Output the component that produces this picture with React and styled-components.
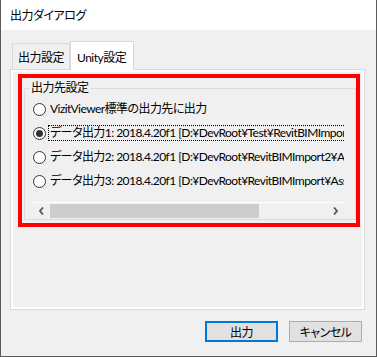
import React from "react";
import styled, { createGlobalStyle } from "styled-components";

const GlobalStyle = createGlobalStyle`
  html, body { margin: 0; padding: 0; background: #ffffff; }
  * { box-sizing: border-box; }
`;

const FONT = `Lato, "Noto Sans CJK JP", sans-serif`;

const Window = styled.div`
  width: 377px;
  height: 357px;
  display: flex;
  flex-direction: column;
  border-left: 1px solid #5a5a5a;
  border-right: 1px solid #5a5a5a;
  border-bottom: 1px solid #5a5a5a;
  font-family: ${FONT};
  font-size: 12px;
  font-feature-settings: "palt";
  letter-spacing: -0.5px;
  color: #000;
`;

const TitleBar = styled.div`
  height: 30px;
  flex: none;
  background: #ffffff;
  display: flex;
  align-items: center;
  padding-left: 9px;
  padding-bottom: 1px;
`;

const Body = styled.div`
  flex: 1;
  background: #f0f0f0;
  padding: 11px 11px 0 9px;
  display: flex;
  flex-direction: column;
`;

const TabStrip = styled.div`
  display: flex;
  align-items: flex-end;
  height: 29px;
  padding-left: 2px;
  margin-bottom: -1px;
  position: relative;
  z-index: 1;
`;

const Tab = styled.div`
  height: ${(p) => (p.$active ? 29 : 26)}px;
  width: ${(p) => p.$w}px;
  margin-bottom: ${(p) => (p.$active ? 0 : 1)}px;
  background: ${(p) => (p.$active ? "#ffffff" : "#f0f0f0")};
  border: 1px solid #d9d9d9;
  border-bottom: none;
  padding-left: ${(p) => p.$pl}px;
  display: flex;
  align-items: center;
  white-space: nowrap;
`;

const Panel = styled.div`
  width: 355px;
  height: 241px;
  border: 1px solid #d9d9d9;
  box-shadow: inset 0 0 0 2px #ffffff;
  background: #f0f0f0;
  padding: 4px 0 0 7px;
`;

const RedFrame = styled.div`
  width: 342px;
  height: 153px;
  border: 4px solid #ff0000;
  padding: 3px 0 3px 2px;
`;

const GroupBox = styled.fieldset`
  margin: 0;
  width: 332px;
  height: 139px;
  border: 1px solid #dcdcdc;
  padding: 0 10px 0 4px;
  min-width: 0;
  display: flex;
  flex-direction: column;
`;

const Legend = styled.legend`
  padding: 0 2px;
  line-height: 14px;
  font-size: 12px;
`;

const ScrollArea = styled.div`
  width: 311px;
  margin-left: 4px;
  height: 124px;
  display: flex;
  flex-direction: column;
  overflow: hidden;
`;

const Rows = styled.div`
  padding-top: 2px;
  flex: 1;
  overflow: hidden;
  letter-spacing: -0.55px;
`;

const Row = styled.div`
  height: 24px;
  display: flex;
  align-items: center;
  white-space: nowrap;
`;

const Radio = styled.span`
  flex: none;
  width: 13px;
  height: 13px;
  border-radius: 50%;
  border: 1px solid #333333;
  background: #ffffff;
  display: flex;
  align-items: center;
  justify-content: center;
  margin-right: 2px;
  &::after {
    content: "";
    width: 7px;
    height: 7px;
    border-radius: 50%;
    background: ${(p) => (p.$checked ? "#333333" : "transparent")};
  }
`;

const Label = styled.span`
  line-height: 14px;
  padding: 0 1px;
  border: 1px ${(p) => (p.$focus ? "dotted #000000" : "solid transparent")};
`;

const HScroll = styled.div`
  height: 17px;
  flex: none;
  display: flex;
  border-top: 1px solid #ffffff;
  background: #f0f0f0;
`;

const ArrowBtn = styled.div`
  width: 17px;
  flex: none;
  display: flex;
  align-items: center;
  justify-content: center;
`;

const Track = styled.div`
  flex: 1;
  display: flex;
  align-items: stretch;
  padding: 1px 0;
`;

const Thumb = styled.div`
  width: 209px;
  background: #cdcdcd;
`;

const ButtonRow = styled.div`
  display: flex;
  justify-content: flex-end;
  gap: 11px;
  margin-top: 11px;
  padding-right: 3px;
`;

const Button = styled.div`
  width: 73px;
  height: 21px;
  background: #e1e1e1;
  border: ${(p) => (p.$default ? "2px solid #0078d7" : "1px solid #adadad")};
  display: flex;
  align-items: center;
  justify-content: center;
  font-size: 12px;
`;

const Chevron = ({ dir }) => (
  <svg width="5" height="8" viewBox="0 0 5 8">
    <path
      d={dir === "left" ? "M4 0.5 L1 4 L4 7.5" : "M1 0.5 L4 4 L1 7.5"}
      fill="none"
      stroke="#555555"
      strokeWidth="1.8"
    />
  </svg>
);

const rows = [
  { text: "VizitViewer標準の出力先に出力" },
  { text: "データ出力1: 2018.4.20f1 [D:¥DevRoot¥Test¥RevitBIMImport¥Assets]", checked: true },
  { text: "データ出力2: 2018.4.20f1 [D:¥DevRoot¥RevitBIMImport2¥Assets]" },
  { text: "データ出力3: 2018.4.20f1 [D:¥DevRoot¥RevitBIMImport¥Assets]" },
];

export default function App() {
  return (
    <>
      <GlobalStyle />
      <Window>
        <TitleBar>出力ダイアログ</TitleBar>
        <Body>
          <TabStrip>
            <Tab $w={58} $pl={5}>出力設定</Tab>
            <Tab $active $w={64} $pl={6}>Unity設定</Tab>
          </TabStrip>
          <Panel>
            <RedFrame>
              <GroupBox>
                <Legend>出力先設定</Legend>
                <ScrollArea>
                  <Rows>
                    {rows.map((r, i) => (
                      <Row key={i}>
                        <Radio $checked={r.checked} />
                        <Label $focus={r.checked}>{r.text}</Label>
                      </Row>
                    ))}
                  </Rows>
                  <HScroll>
                    <ArrowBtn><Chevron dir="left" /></ArrowBtn>
                    <Track><Thumb /></Track>
                    <ArrowBtn><Chevron dir="right" /></ArrowBtn>
                  </HScroll>
                </ScrollArea>
              </GroupBox>
            </RedFrame>
          </Panel>
          <ButtonRow>
            <Button $default>出力</Button>
            <Button>キャンセル</Button>
          </ButtonRow>
        </Body>
      </Window>
    </>
  );
}
